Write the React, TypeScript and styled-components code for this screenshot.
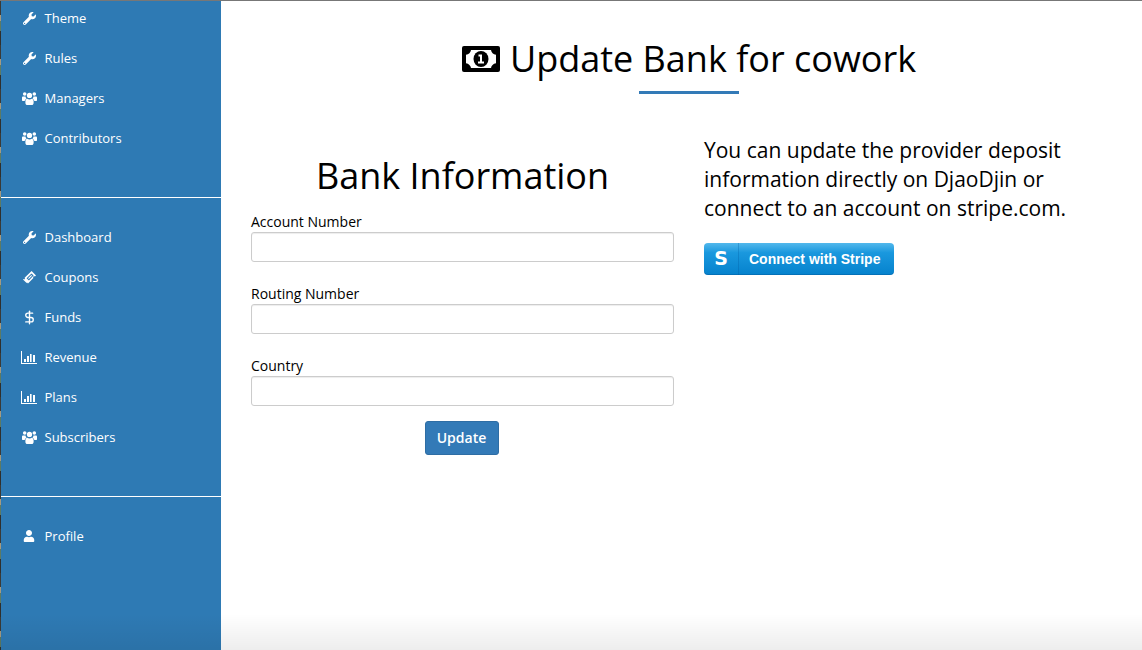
import { createGlobalStyle, styled } from "styled-components";
import { FaUser, FaWrench } from "react-icons/fa";
import { DollarSign } from "lucide-react";
import type { ReactNode } from "react";

const GlobalStyle = createGlobalStyle`
  html, body {
    margin: 0;
    height: 100%;
    background: #fff;
    overflow: hidden;
  }
  body {
    font-family: "Open Sans", "Liberation Sans", sans-serif;
    color: #000;
  }
`;

function UsersIcon() {
  return (
    <svg width="15" height="13" viewBox="0 0 15 13" fill="currentColor">
      <circle cx="2.700" cy="2" r="1.800" />
      <circle cx="12.300" cy="2" r="1.800" />
      <circle cx="7.500" cy="3.400" r="2.600" />
      <path d="M0 5.500C0 4.800.5 4.400 1.200 4.400h2.300c.1.9.5 1.700 1.100 2.300-1 .4-1.700 1.200-1.900 2.300H1C.3 9 0 8.600 0 8Z" />
      <path d="M15 5.500c0-.7-.5-1.100-1.200-1.100h-2.300c-.1.900-.5 1.700-1.100 2.300 1 .4 1.700 1.200 1.900 2.300H14c.7 0 1-.4 1-1Z" />
      <path d="M5.300 6.800c1.200 1 3.200 1 4.400 0 1 .2 1.900 1 1.900 2.400v1.700c0 1.200-.8 2.100-2 2.100H5.400c-1.200 0-2-.9-2-2.100V9.200c0-1.400.9-2.200 1.900-2.400Z" />
    </svg>
  );
}

function TicketIcon() {
  return (
    <svg width="15" height="15" viewBox="0 0 15 15" fill="currentColor">
      <path
        fillRule="evenodd"
        d="M9.600 1 14 5.400 12.900 6.500 12 6 11 7 11.400 7.900 6 13.600 5 12.600 4.600 13 1 9.400 1.400 9 2.300 9.400 3 8.600 2.600 7.700 9.600 1ZM9.500 3.500 4.600 8.200 6.900 10.500 11.600 5.600 9.500 3.500Z"
      />
      <path d="M9.300 5 10.100 5.800 6.800 9.100 6 8.300Z" />
    </svg>
  );
}

function BarChartIcon() {
  return (
    <svg width="16" height="13" viewBox="0 0 16 13" fill="currentColor">
      <path d="M0 0h1v12h15v1H0zM3 8h2v3H3zM6 5h2v6H6zM9 3h1.600v8H9zM12 4h2v7h-2z" />
    </svg>
  );
}

function MoneyIcon() {
  return (
    <svg width="38" height="26" viewBox="0 0 38 26">
      <rect width="38" height="26" rx="2" fill="#000" />
      <path
        d="M9 4h20c.4 2.500 2.200 4.300 5 4.800v8.400c-2.800.5-4.600 2.300-5 4.800H9c-.4-2.500-2.200-4.300-5-4.800V8.800C6.800 8.300 8.600 6.500 9 4Z"
        fill="#fff"
      />
      <ellipse cx="19" cy="13" rx="7.500" ry="8" fill="#000" />
      <path d="M16.500 8.500H20v7h2v2h-6v-2h2v-5h-1.500z" fill="#fff" />
    </svg>
  );
}

interface NavItemProps {
  icon: ReactNode;
  label: string;
}

function NavItem({ icon, label }: NavItemProps) {
  return (
    <NavRow>
      <NavIcon>{icon}</NavIcon>
      <span>{label}</span>
    </NavRow>
  );
}

function Field({ label }: { label: string }) {
  return (
    <FieldGroup>
      <FieldLabel>{label}</FieldLabel>
      <FieldInput type="text" />
    </FieldGroup>
  );
}

export default function App() {
  return (
    <>
      <GlobalStyle />
      <Page>
        <DesktopEdge />
        <Sidebar>
          <FirstGroup>
            <NavItem icon={<FaWrench size={13} />} label="Theme" />
            <NavItem icon={<FaWrench size={13} />} label="Rules" />
            <NavItem icon={<UsersIcon />} label="Managers" />
            <NavItem icon={<UsersIcon />} label="Contributors" />
          </FirstGroup>
          <MiddleGroup>
            <NavItem icon={<FaWrench size={13} />} label="Dashboard" />
            <NavItem icon={<TicketIcon />} label="Coupons" />
            <NavItem icon={<DollarSign size={15} strokeWidth={2.2} />} label="Funds" />
            <NavItem icon={<BarChartIcon />} label="Revenue" />
            <NavItem icon={<BarChartIcon />} label="Plans" />
            <NavItem icon={<UsersIcon />} label="Subscribers" />
          </MiddleGroup>
          <LastGroup>
            <NavItem icon={<FaUser size={12} />} label="Profile" />
          </LastGroup>
        </Sidebar>
        <Main>
          <PageTitle>
            <MoneyIcon />
            <span>Update Bank for cowork</span>
          </PageTitle>
          <TitleRule />
          <Columns>
            <BankForm>
              <SectionTitle>Bank Information</SectionTitle>
              <Field label="Account Number" />
              <Field label="Routing Number" />
              <Field label="Country" />
              <UpdateButton>Update</UpdateButton>
            </BankForm>
            <Aside>
              <Lead>
                You can update the provider deposit information directly on
                DjaoDjin or connect to an account on stripe.com.
              </Lead>
              <StripeButton>
                <StripeMark>S</StripeMark>
                <StripeLabel>Connect with Stripe</StripeLabel>
              </StripeButton>
            </Aside>
          </Columns>
        </Main>
        <WindowFade />
      </Page>
    </>
  );
}

const Page = styled.div`
  position: relative;
  display: flex;
  width: 1142px;
  height: 650px;
  overflow: hidden;
  border-top: 1px solid #777;
  box-sizing: border-box;
`;

const DesktopEdge = styled.div`
  flex: 0 0 1px;
  background: repeating-linear-gradient(
    180deg,
    #3a3a36 0 14px,
    #a59a80 14px 20px,
    #5d7a63 20px 30px,
    #2f2f2c 30px 44px
  );
`;

const Sidebar = styled.nav`
  flex: 0 0 220px;
  background: #2e7ab4;
  color: #fff;
  font-size: 13px;
  font-weight: 500;
  overflow: hidden;
`;

const FirstGroup = styled.div`
  box-sizing: border-box;
  height: 200px;
  margin-top: -3px;
  border-bottom: 1px solid #fff;
`;

const MiddleGroup = styled.div`
  box-sizing: border-box;
  height: 299px;
  padding-top: 19px;
  border-bottom: 1px solid #fff;
`;

const LastGroup = styled.div`
  padding-top: 19px;
`;

const NavRow = styled.div`
  display: flex;
  align-items: center;
  height: 40px;
  padding-left: 20px;
`;

const NavIcon = styled.span`
  display: flex;
  justify-content: center;
  align-items: center;
  width: 16px;
  margin-right: 7.500px;
`;

const Main = styled.main`
  flex: 1;
  box-sizing: border-box;
  padding: 33px 0 0 15px;
`;

const PageTitle = styled.h1`
  display: flex;
  justify-content: center;
  align-items: center;
  gap: 10px;
  margin: 0;
  height: 50px;
  font-size: 36px;
  font-weight: 400;
  line-height: 50px;
`;

const TitleRule = styled.div`
  width: 100px;
  height: 3px;
  margin: 7px auto 0;
  background: #337ab7;
`;

const Columns = styled.div`
  display: grid;
  grid-template-columns: 453px 453px;
  margin-top: 15px;
`;

const BankForm = styled.form`
  display: flex;
  flex-direction: column;
  padding: 0 15px;
  margin-top: 42px;
`;

const SectionTitle = styled.h2`
  margin: 0 0 11px;
  text-align: center;
  font-size: 36px;
  font-weight: 400;
  line-height: 50px;
`;

const FieldGroup = styled.div`
  display: flex;
  flex-direction: column;
  margin-bottom: 22px;
`;

const FieldLabel = styled.label`
  font-size: 14px;
  line-height: 20px;
`;

const FieldInput = styled.input`
  box-sizing: border-box;
  height: 30px;
  border: 1px solid #ccc;
  border-radius: 3px;
  background: #fff;
  box-shadow: inset 0 1px 1px rgba(0, 0, 0, 0.075);
`;

const UpdateButton = styled.button`
  align-self: center;
  box-sizing: border-box;
  width: 74px;
  height: 34px;
  margin: -7px 2px 0 0;
  border: 1px solid #2e6da4;
  border-radius: 3px;
  background: #337ab7;
  color: #fff;
  font-family: inherit;
  font-size: 14px;
  font-weight: 600;
  line-height: 30px;
`;

const Aside = styled.aside`
  padding: 27px 15px 0;
`;

const Lead = styled.p`
  width: 375px;
  margin: 0 0 19.500px;
  font-size: 21px;
  line-height: 29px;
`;

const StripeButton = styled.a`
  display: flex;
  align-items: center;
  box-sizing: border-box;
  width: 190px;
  height: 32px;
  border-radius: 4px;
  background: linear-gradient(180deg, #52b8ec 0%, #1a98de 30%, #0582cd 100%);
  box-shadow: inset 0 -1px 0 rgba(0, 60, 120, 0.25);
  color: #fff;
  font-family: "Liberation Sans", Arial, sans-serif;
  font-weight: 700;
`;

const StripeMark = styled.span`
  flex: 0 0 35px;
  height: 100%;
  border-right: 1px solid rgba(0, 90, 160, 0.3);
  box-sizing: border-box;
  text-align: center;
  font-family: "DejaVu Sans", sans-serif;
  font-size: 19px;
  font-weight: 700;
  line-height: 31px;
`;

const StripeLabel = styled.span`
  margin-left: 10px;
  font-size: 14px;
`;

const WindowFade = styled.div`
  position: absolute;
  left: 0;
  right: 0;
  bottom: 0;
  height: 36px;
  background: linear-gradient(180deg, rgba(0, 0, 0, 0) 0%, rgba(0, 0, 0, 0.07) 100%);
  pointer-events: none;
`;
